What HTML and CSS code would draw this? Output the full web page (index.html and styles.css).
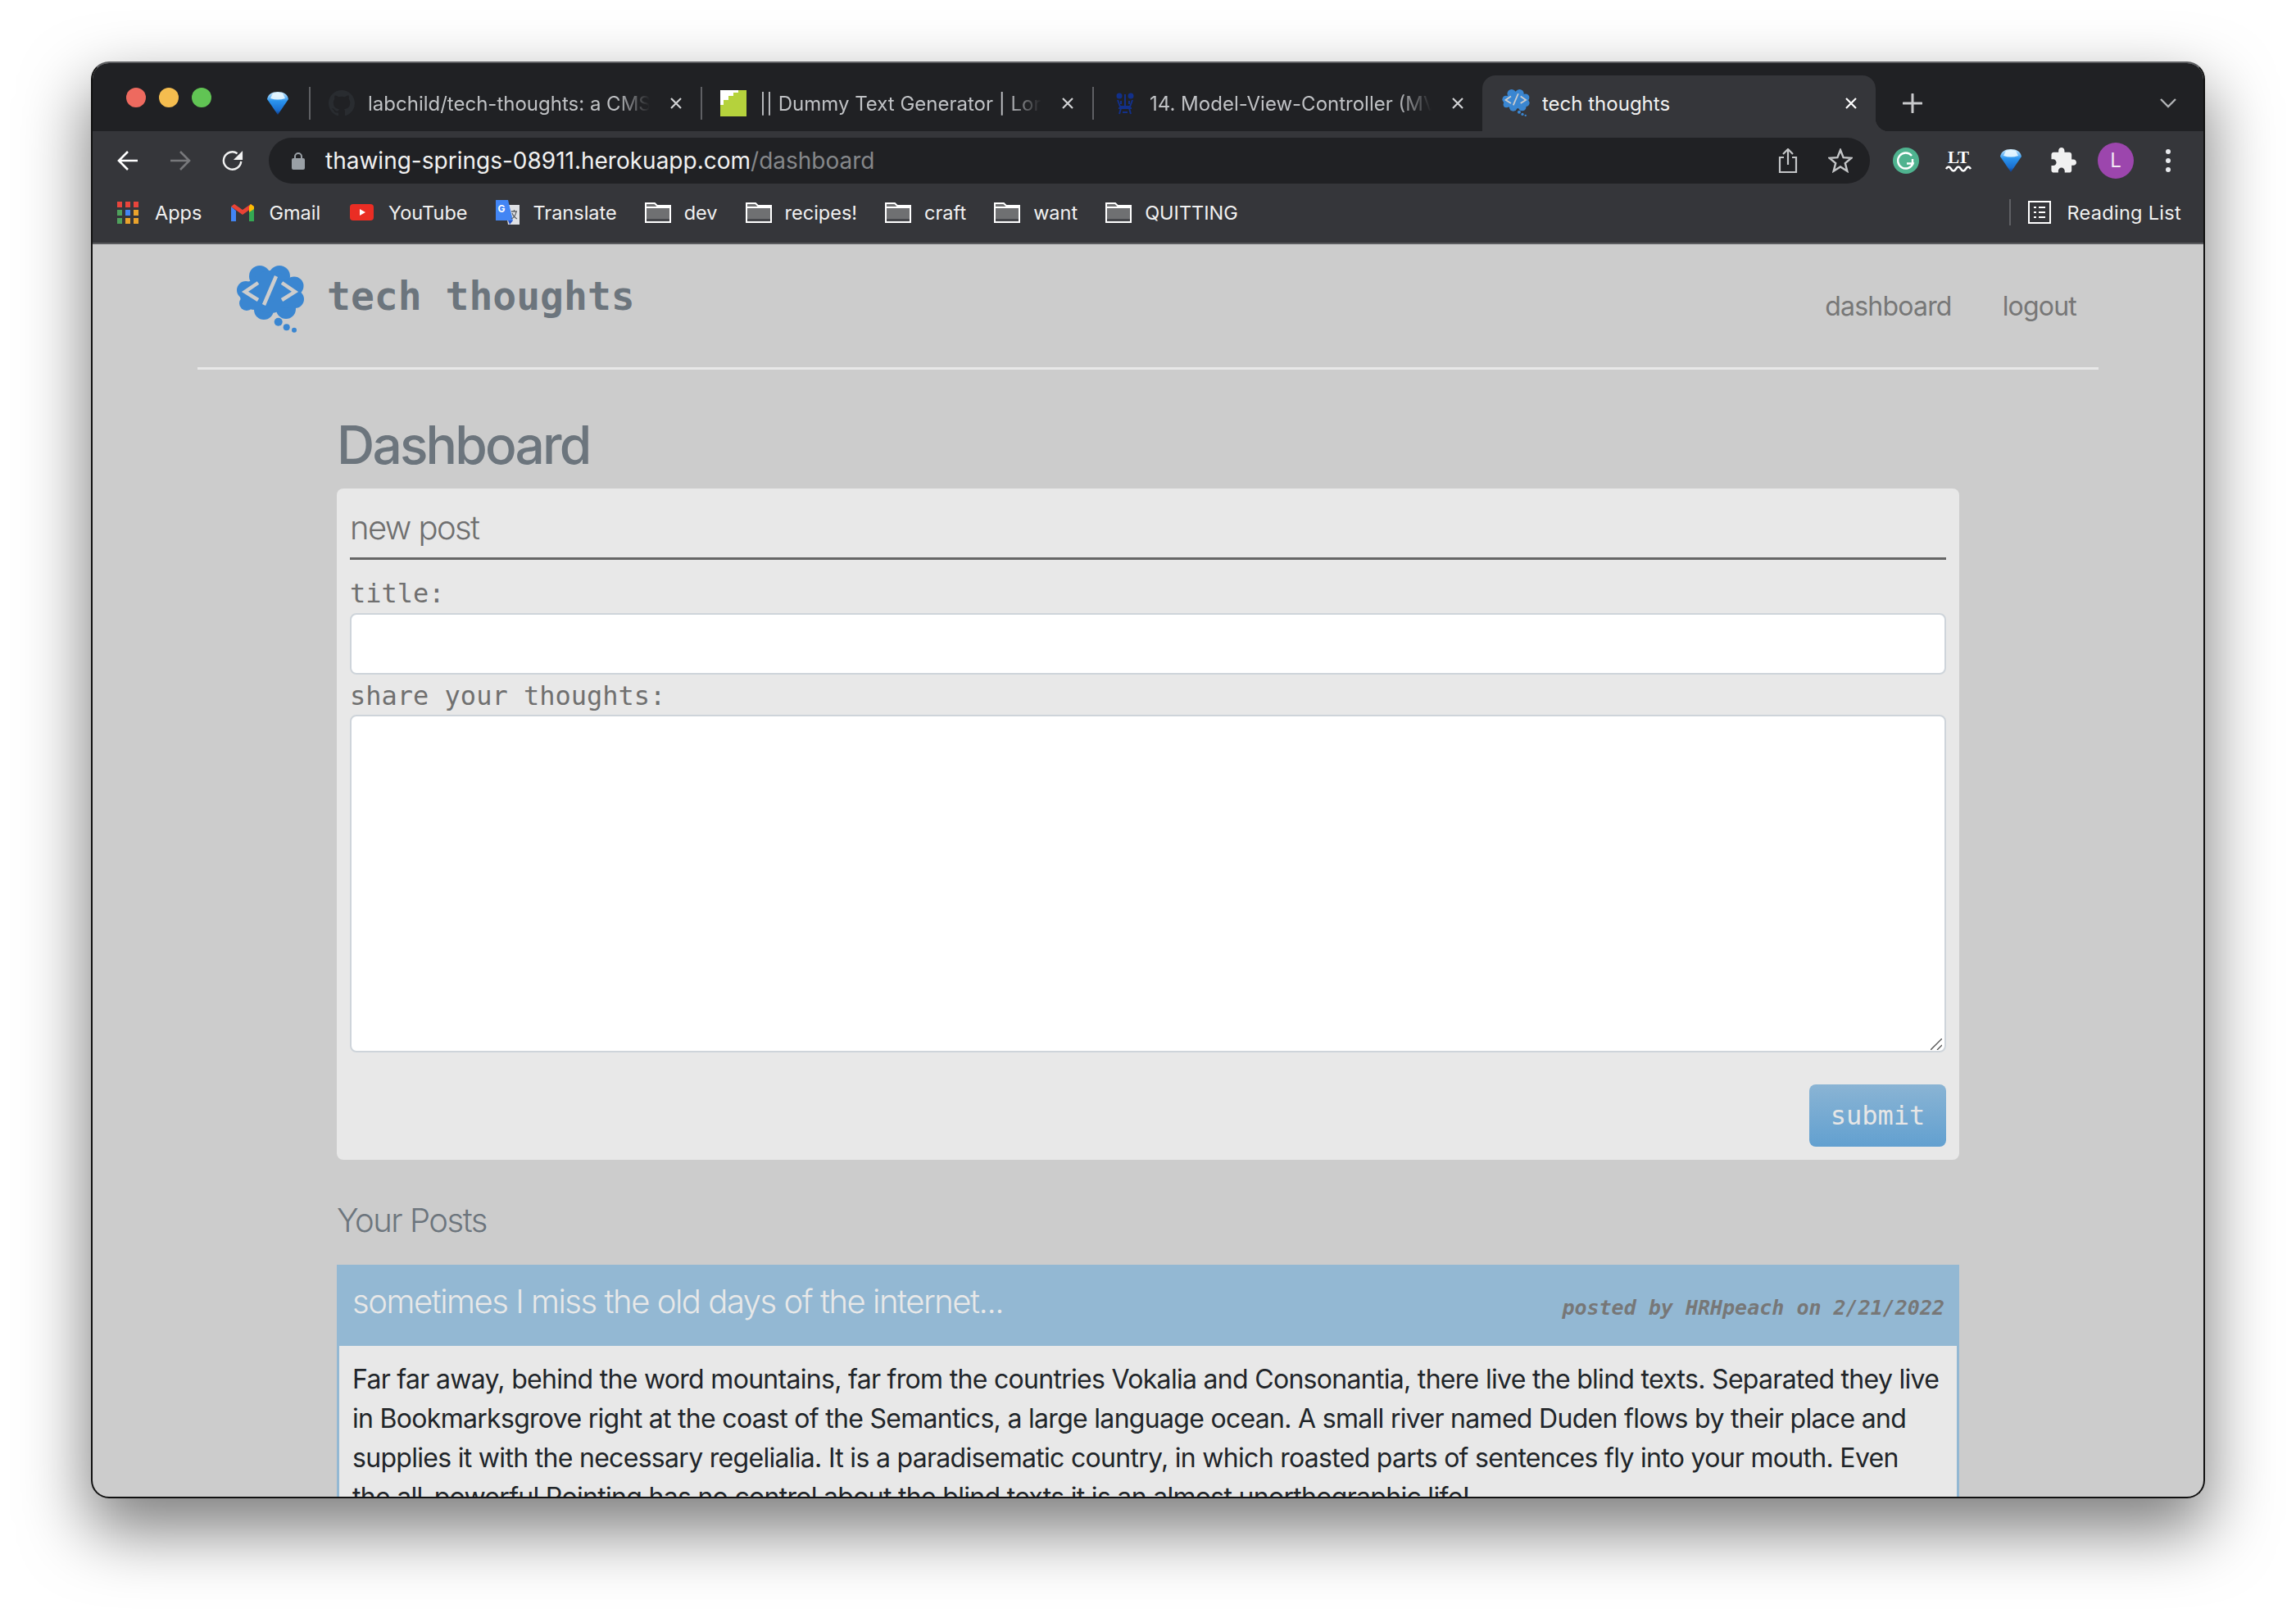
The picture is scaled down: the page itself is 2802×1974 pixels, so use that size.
FILE: index.html
```html
<!DOCTYPE html>
<html lang="en">

<head>
    <meta charset="UTF-8">
    <title>tech thoughts</title>
    <link rel="stylesheet" href="styles.css">
</head>

<body>
    <svg class="defs" width="0" height="0">
        <defs>
            <linearGradient id="gem" x1="0" y1="0" x2="0" y2="1">
                <stop offset="0" stop-color="#cfeeff" />
                <stop offset=".4" stop-color="#2a94ee" />
                <stop offset=".8" stop-color="#1a6fd0" />
                <stop offset="1" stop-color="#0d3a86" />
            </linearGradient>
            <symbol id="diamond" viewBox="0 0 26 28">
                <path d="M13 0C6 0 1 3 0 9l13 19L26 9C25 3 20 0 13 0z" fill="url(#gem)" />
                <path d="M7 2c4-1.5 8-1.5 12 0l3 6c-6 2-12 2-18 0z" fill="#eaf8ff" opacity=".9" />
            </symbol>
            <symbol id="folder" viewBox="0 0 32 26">
                <path d="M1 25V2h11l3 3h16v20z" fill="#6f7072" stroke="#fff" stroke-width="2" />
                <path d="M1 7h30" stroke="#fff" stroke-width="2" />
                <path d="M2 21h28v3H2z" fill="#45464a" />
            </symbol>
            <symbol id="close" viewBox="0 0 16 16">
                <path d="M2 2l12 12M14 2L2 14" fill="none" stroke="currentColor" stroke-width="2.2" />
            </symbol>
        </defs>
    </svg>

    <div class="window">
        <div class="tabstrip">
            <div class="lights">
                <span class="light red"></span>
                <span class="light yellow"></span>
                <span class="light green"></span>
            </div>
            <svg class="pinned"><use href="#diamond" /></svg>
            <span class="tab-sep"></span>
            <div class="tab">
                <svg class="favicon" viewBox="0 0 16 16"><path fill="#292c30" d="M8 0C3.58 0 0 3.58 0 8c0 3.54 2.29 6.53 5.47 7.59.4.07.55-.17.55-.38 0-.19-.01-.82-.01-1.49-2.01.37-2.53-.49-2.69-.94-.09-.23-.48-.94-.82-1.13-.28-.15-.68-.52-.01-.53.63-.01 1.08.58 1.23.82.72 1.21 1.87.87 2.33.66.07-.52.28-.87.51-1.07-1.78-.2-3.64-.89-3.64-3.95 0-.87.31-1.59.82-2.15-.08-.2-.36-1.02.08-2.12 0 0 .67-.21 2.2.82.64-.18 1.32-.27 2-.27.68 0 1.36.09 2 .27 1.53-1.04 2.2-.82 2.2-.82.44 1.1.16 1.92.08 2.12.51.56.82 1.27.82 2.15 0 3.07-1.87 3.75-3.65 3.95.29.25.54.73.54 1.48 0 1.07-.01 1.93-.01 2.2 0 .21.15.46.55.38A8.013 8.013 0 0016 8c0-4.42-3.58-8-8-8z" /></svg>
                <span class="tab-title">labchild/tech-thoughts: a CMS site for tech</span>
                <svg class="tab-close"><use href="#close" /></svg>
            </div>
            <span class="tab-sep"></span>
            <div class="tab">
                <svg class="favicon" viewBox="0 0 32 32"><rect width="32" height="32" fill="#fff" /><path d="M0 32V18h4v-6h6V7h6V3h6V0h10v32z" fill="#b5d23c" /></svg>
                <span class="tab-title">|| Dummy Text Generator | Lorem Ipsum</span>
                <svg class="tab-close"><use href="#close" /></svg>
            </div>
            <span class="tab-sep"></span>
            <div class="tab">
                <svg class="favicon favicon-crown" viewBox="0 0 24 26" fill="none" stroke="#12308a" stroke-width="2"><circle cx="5" cy="4" r="2.5" fill="#12308a" /><circle cx="19" cy="4" r="2.5" fill="#12308a" /><path d="M12 2v14M3 9l3 8h12l3-8M7 10v4M17 10v4M4 19h16M7 19l-2 7M17 19l2 7M9 24h6" /></svg>
                <span class="tab-title">14. Model-View-Controller (MVC) Pattern</span>
                <svg class="tab-close"><use href="#close" /></svg>
            </div>
            <div class="tab tab-active">
                <svg class="favicon logo-small" viewBox="0 0 82 84"><use href="#cloud" /></svg>
                <span class="tab-title">tech thoughts</span>
                <svg class="tab-close"><use href="#close" /></svg>
            </div>
            <svg class="new-tab" viewBox="0 0 24 24"><path d="M12 1v22M1 12h22" stroke="#c8c9cb" stroke-width="3" stroke-linecap="round" /></svg>
            <svg class="tab-list" viewBox="0 0 20 12"><path d="M1 1l9 9 9-9" fill="none" stroke="#b0b2b5" stroke-width="2.4" /></svg>
        </div>

        <div class="toolbar">
            <svg class="nav-icon" viewBox="0 0 26 26"><path d="M25 13H3M13 2L2 13l11 11" fill="none" stroke="#fff" stroke-width="2.6" /></svg>
            <svg class="nav-icon" viewBox="0 0 26 26"><path d="M1 13h22M13 2l11 11-11 11" fill="none" stroke="#77787b" stroke-width="2.6" /></svg>
            <svg class="nav-icon" viewBox="0 0 28 28"><path d="M25 15A11.5 11.5 0 1 1 20 4.5" fill="none" stroke="#f1f1f1" stroke-width="2.6" /><path d="M27 1v12H15z" fill="#f1f1f1" /></svg>
            <div class="omnibox">
                <svg class="lock" viewBox="0 0 16 22"><path d="M4 9V6a4 4 0 0 1 8 0v3" fill="none" stroke="#9aa0a6" stroke-width="2" /><rect y="8" width="16" height="14" rx="2" fill="#9aa0a6" /></svg>
                <span class="url">thawing-springs-08911.herokuapp.com<span class="url-path">/dashboard</span></span>
                <svg class="omni-share" viewBox="0 0 24 30" fill="none" stroke="#c4c6c8" stroke-width="2.2"><path d="M7 11H2v18h20V11h-5M12 20V2M6 7l6-6 6 6" /></svg>
                <svg class="omni-star" viewBox="0 0 30 30"><path d="M15 2l3.6 9.2 9.9.6-7.7 6.3 2.5 9.6L15 22.4l-8.3 5.3 2.5-9.6-7.7-6.3 9.9-.6z" fill="none" stroke="#c4c6c8" stroke-width="2.4" /></svg>
            </div>
            <div class="extensions">
                <svg class="ext-icon" viewBox="0 0 32 32"><circle cx="16" cy="16" r="16" fill="#4fb38f" /><path d="M23 10a9.5 9.5 0 1 0 1.5 9.5H17" fill="none" stroke="#fff" stroke-width="2.4" /><path d="M24 14v7" stroke="#fff" stroke-width="2.4" /></svg>
                <svg class="ext-icon" viewBox="0 0 32 26"><text x="16" y="16" text-anchor="middle" class="lt-mark">LT</text><path d="M1 23q3-5 6 0t6 0 6 0 6 0 6 0" fill="none" stroke="#fff" stroke-width="2.5" /></svg>
                <svg class="ext-gem"><use href="#diamond" /></svg>
                <svg class="ext-icon" viewBox="1 1 22 22"><path fill="#f1f1f1" d="M20.5 11H19V7c0-1.1-.9-2-2-2h-4V3.5C13 2.12 11.88 1 10.5 1S8 2.12 8 3.5V5H4c-1.1 0-1.99.9-1.99 2v3.8H3.5c1.49 0 2.7 1.21 2.7 2.7s-1.21 2.7-2.7 2.7H2V20c0 1.1.9 2 2 2h3.8v-1.5c0-1.49 1.21-2.7 2.7-2.7 1.49 0 2.7 1.21 2.7 2.7V22H17c1.1 0 2-.9 2-2v-4h1.5c1.38 0 2.5-1.12 2.5-2.5S21.88 11 20.5 11z" /></svg>
                <div class="avatar">L</div>
                <div class="kebab"><span></span><span></span><span></span></div>
            </div>
        </div>

        <div class="bookmarks">
            <div class="bookmark">
                <svg class="bm-apps" viewBox="0 0 26 27">
                    <rect width="6" height="7" fill="#e8453c" /><rect x="10" width="6" height="7" fill="#e8453c" /><rect x="20" width="6" height="7" fill="#e8453c" />
                    <rect y="10" width="6" height="7" fill="#4fa15c" /><rect x="10" y="10" width="6" height="7" fill="#4285f4" /><rect x="20" y="10" width="6" height="7" fill="#eaa32c" />
                    <rect y="20" width="6" height="7" fill="#4fa15c" /><rect x="10" y="20" width="6" height="7" fill="#eaa32c" /><rect x="20" y="20" width="6" height="7" fill="#eaa32c" />
                </svg>
                Apps
            </div>
            <div class="bookmark">
                <svg class="bm-gmail" viewBox="0 0 28 21">
                    <path d="M0 3v18h6V8z" fill="#4285f4" /><path d="M22 8v13h6V3z" fill="#34a853" />
                    <path d="M0 3l14 10L28 3l-4-3-10 7L4 0z" fill="#ea4335" /><path d="M24 0l4 3v3l-6 4V3z" fill="#fbbc04" />
                </svg>
                Gmail
            </div>
            <div class="bookmark bm-tight">
                <svg class="bm-youtube" viewBox="0 0 29 20"><rect width="29" height="20" rx="4" fill="#ea2d24" /><path d="M12 6l7 4-7 4z" fill="#fff" /></svg>
                YouTube
            </div>
            <div class="bookmark bm-tight">
                <svg class="bm-translate" viewBox="0 0 30 30">
                    <path d="M12 6h18v24H16z" fill="#dfe1e5" /><path d="M1 0h15l6 25H1z" fill="#4285f4" /><path d="M16 25h6l-4 5z" fill="#2a56c6" />
                    <text x="8" y="15" text-anchor="middle" class="tr-mark">G</text>
                    <path d="M20 14h7M23.5 12v2M26 14q-1 7-6 9M21 16q2 5 6 7" fill="none" stroke="#5f6368" stroke-width="1.3" />
                </svg>
                Translate
            </div>
            <div class="bookmark bm-tight"><svg class="bm-folder"><use href="#folder" /></svg>dev</div>
            <div class="bookmark bm-tight"><svg class="bm-folder"><use href="#folder" /></svg>recipes!</div>
            <div class="bookmark bm-tight"><svg class="bm-folder"><use href="#folder" /></svg>craft</div>
            <div class="bookmark bm-tight"><svg class="bm-folder"><use href="#folder" /></svg>want</div>
            <div class="bookmark bm-tight"><svg class="bm-folder"><use href="#folder" /></svg>QUITTING</div>
            <span class="bm-sep"></span>
            <div class="bookmark reading-list">
                <svg class="bm-reading" viewBox="0 0 28 28" fill="none" stroke="#fff" stroke-width="2">
                    <rect x="1" y="1" width="26" height="26" />
                    <path d="M7 8h3M13 8h8M7 14h3M13 14h8M7 20h3M13 20h8" />
                </svg>
                Reading List
            </div>
        </div>

        <div class="page">
            <header class="site-header">
                <div class="brand">
                    <svg class="logo" viewBox="0 0 84 84">
                        <g id="cloud">
                            <g fill="#3a86d1">
                                <circle cx="28" cy="13" r="13" /><circle cx="52" cy="13" r="13" /><circle cx="70" cy="25" r="11.5" />
                                <circle cx="71" cy="41" r="11" /><circle cx="60" cy="53" r="12" /><circle cx="33" cy="54" r="12" />
                                <circle cx="12" cy="46" r="9" /><circle cx="11" cy="30" r="11" /><circle cx="41" cy="32" r="26" />
                                <circle cx="22" cy="36" r="18" /><circle cx="60" cy="34" r="18" />
                                <circle cx="50.7" cy="68.7" r="5" /><circle cx="60.7" cy="75.3" r="4" /><circle cx="70" cy="78.7" r="3" />
                            </g>
                            <path d="M26 21L10 32l16 10M55 21l16 11-16 10M48 13L33 48" fill="none" stroke="#cdcdcd" stroke-width="4.5" />
                        </g>
                    </svg>
                    <span class="brand-name">tech thoughts</span>
                </div>
                <nav class="site-nav">
                    <a class="nav-link">dashboard</a>
                    <a class="nav-link">logout</a>
                </nav>
            </header>

            <main class="content">
                <h1 class="page-title">Dashboard</h1>
                <form class="new-post">
                    <h2 class="new-post-title">new post</h2>
                    <label class="field-label first">title:</label>
                    <input class="field-input" type="text">
                    <label class="field-label">share your thoughts:</label>
                    <div class="area-wrap">
                        <textarea class="field-area"></textarea>
                        <svg class="area-grip" viewBox="0 0 14 14" fill="none" stroke="#555" stroke-width="1.4"><path d="M0 14L14 0M8 14l6-6" /></svg>
                    </div>
                    <div class="form-actions">
                        <button class="submit-btn" type="button">submit</button>
                    </div>
                </form>

                <h3 class="posts-title">Your Posts</h3>
                <article class="post">
                    <div class="post-head">
                        <span class="post-title">sometimes I miss the old days of the internet...</span>
                        <span class="post-meta">posted by HRHpeach on 2/21/2022</span>
                    </div>
                    <p class="post-body">Far far away, behind the word mountains, far from the countries Vokalia and Consonantia, there live the blind texts. Separated they live in Bookmarksgrove right at the coast of the Semantics, a large language ocean. A small river named Duden flows by their place and supplies it with the necessary regelialia. It is a paradisematic country, in which roasted parts of sentences fly into your mouth. Even the all-powerful Pointing has no control about the blind texts it is an almost unorthographic life!</p>
                </article>
            </main>
        </div>
    </div>
</body>

</html>
```

FILE: styles.css
```css
* {
    box-sizing: border-box;
}

html,
body {
    margin: 0;
    background: #fff;
}

body {
    padding: 75px 111px 0;
    height: 1974px;
    overflow: hidden;
    font-family: Inter, "Noto Sans", sans-serif;
}

.defs {
    display: block;
    height: 0;
}

svg {
    display: block;
    flex-shrink: 0;
}

.window {
    width: 2580px;
    height: 1753px;
    display: flex;
    flex-direction: column;
    border: 2px solid #111;
    border-top-color: #5c5d60;
    border-radius: 22px;
    overflow: hidden;
    background: #ccc;
    box-shadow: 0 36px 80px 4px rgba(0, 0, 0, .5);
}

/* tabs */
.tabstrip {
    height: 83px;
    flex-shrink: 0;
    display: flex;
    align-items: center;
    padding-top: 15px;
    background: #202124;
    color: #c0c2c5;
    font-size: 24px;
}

.lights {
    display: flex;
    gap: 16px;
    align-self: flex-start;
    margin: 15px 0 0 41px;
}

.light {
    width: 24px;
    height: 24px;
    border-radius: 50%;
}

.red {
    background: #ee6a5f;
}

.yellow {
    background: #f5bd4f;
}

.green {
    background: #61c454;
}

.pinned {
    width: 26px;
    height: 28px;
    margin: 0 25px 0 68px;
}

.tab-sep {
    width: 2px;
    height: 40px;
    background: #5f6064;
}

.tab {
    width: 476px;
    height: 68px;
    display: flex;
    align-items: center;
    padding-left: 22px;
}

.favicon {
    width: 32px;
    height: 32px;
    margin-right: 16px;
}

.favicon-crown {
    width: 24px;
    height: 28px;
    margin: 0 18px 0 4px;
}

.tab-title {
    width: 344px;
    white-space: nowrap;
    overflow: hidden;
    -webkit-mask-image: linear-gradient(to right, #000 88%, transparent);
    mask-image: linear-gradient(to right, #000 88%, transparent);
}

.tab-close {
    width: 16px;
    height: 16px;
    margin-left: 24px;
    color: #d2d3d5;
}

.tab-active {
    position: relative;
    width: 480px;
    margin-left: -2px;
    padding-left: 24px;
    background: #35363a;
    border-radius: 16px 16px 0 0;
    color: #f1f1f1;
}

.tab-active::after {
    content: "";
    position: absolute;
    right: -16px;
    bottom: 0;
    width: 16px;
    height: 16px;
    background: radial-gradient(circle at 100% 0, transparent 16px, #35363a 16.5px);
}

.tab-active .tab-close {
    color: #fff;
}

.logo-small {
    width: 34px;
    height: 34px;
    margin-right: 15px;
}

.tab-active .tab-title {
    -webkit-mask-image: none;
    mask-image: none;
    width: 345px;
}

.new-tab {
    width: 24px;
    height: 24px;
    margin-left: 33px;
}

.tab-list {
    width: 20px;
    height: 12px;
    margin: 0 33px 0 auto;
}

/* toolbar */
.toolbar {
    height: 72px;
    flex-shrink: 0;
    display: flex;
    align-items: center;
    padding-left: 30px;
    background: #35363a;
}

.nav-icon {
    width: 26px;
    height: 26px;
    margin-right: 38px;
}

.nav-icon:nth-child(3) {
    margin-right: 31px;
}

.omnibox {
    width: 1954px;
    height: 56px;
    display: flex;
    align-items: center;
    padding: 0 21px 0 28px;
    border-radius: 28px;
    background: #202124;
}

.lock {
    width: 16px;
    height: 22px;
    margin-right: 25px;
}

.url {
    flex: 1;
    font-size: 28px;
    color: #f1f1f1;
    white-space: nowrap;
}

.url-path {
    color: #85878a;
}

.omni-share {
    width: 24px;
    height: 30px;
    margin-right: 37px;
}

.omni-star {
    width: 30px;
    height: 30px;
}

.extensions {
    display: grid;
    grid-template-columns: repeat(6, 64px);
    justify-items: center;
    align-items: center;
    margin-left: 12px;
}

.ext-icon {
    width: 32px;
    height: 32px;
}

.lt-mark {
    font-family: "Liberation Serif", serif;
    font-weight: bold;
    font-size: 21px;
    fill: #fff;
}

.ext-gem {
    width: 28px;
    height: 28px;
}

.avatar {
    width: 44px;
    height: 44px;
    border-radius: 50%;
    background: #9c46ad;
    color: #f2e8f4;
    font-size: 24px;
    line-height: 44px;
    text-align: center;
}

.kebab {
    display: flex;
    flex-direction: column;
    gap: 5px;
}

.kebab span {
    width: 6px;
    height: 6px;
    border-radius: 50%;
    background: #e8eaed;
}

/* bookmarks bar */
.bookmarks {
    height: 66px;
    flex-shrink: 0;
    display: flex;
    align-items: center;
    gap: 18px;
    padding: 0 27px 10px 30px;
    background: #35363a;
    border-bottom: 2px solid #5a5b5e;
    color: #f1f1f1;
    font-size: 23.5px;
}

.bookmark {
    display: flex;
    align-items: center;
    white-space: nowrap;
    margin-right: 18px;
}

.bm-tight {
    margin-right: 16px;
}

.bookmark svg {
    margin-right: 16px;
}

.bookmark .bm-apps {
    width: 26px;
    height: 27px;
    margin-right: 20px;
}

.bookmark .bm-gmail {
    width: 28px;
    height: 21px;
    margin-right: 18px;
}

.bookmark .bm-youtube {
    width: 29px;
    height: 20px;
    margin-right: 18px;
}

.bm-translate {
    width: 30px;
    height: 30px;
}

.tr-mark {
    font-size: 12px;
    font-weight: bold;
    fill: #fff;
}

.bm-folder {
    width: 32px;
    height: 26px;
}

.bm-sep {
    width: 2px;
    height: 32px;
    margin-left: auto;
    background: #5f6064;
}

.reading-list {
    margin: 0 0 0 3px;
    letter-spacing: .3px;
}

.bookmark .bm-reading {
    width: 28px;
    height: 28px;
    margin-right: 19px;
}

/* site */
.page {
    flex: 1;
    overflow: hidden;
}

.site-header {
    width: 2320px;
    height: 153px;
    margin: 0 auto;
    display: flex;
    justify-content: space-between;
    align-items: center;
    padding: 0 27px 0 48px;
    border-bottom: 3px solid #e8e8e8;
}

.brand {
    display: flex;
    align-self: flex-start;
    align-items: flex-start;
    gap: 26px;
    padding-top: 26px;
}

.logo {
    width: 84px;
    height: 84px;
}

.brand-name {
    margin-top: 9px;
    font-family: "DejaVu Sans Mono", "Liberation Mono", monospace;
    font-weight: bold;
    font-size: 48px;
    line-height: 56px;
    color: #6c757d;
    white-space: pre;
}

.site-nav {
    display: flex;
    gap: 62px;
}

.nav-link {
    font-size: 32px;
    letter-spacing: -.8px;
    color: #777;
}

.content {
    width: 1980px;
    margin: 0 auto;
    padding-top: 54px;
}

.page-title {
    margin: 0 0 15px;
    font-size: 64px;
    line-height: 76px;
    letter-spacing: -2.8px;
    font-weight: 500;
    color: #6c757d;
}

.new-post {
    display: block;
    padding: 24px 16px 16px;
    border-radius: 8px;
    background: #e8e8e8;
}

.new-post-title {
    margin: 0;
    padding-bottom: 12px;
    border-bottom: 3px solid #666;
    font-size: 40px;
    line-height: 48px;
    letter-spacing: -1.6px;
    font-weight: 300;
    color: #6f6f6f;
}

.field-label {
    display: block;
    margin: 7px 0 4px;
    font-family: "DejaVu Sans Mono", "Liberation Mono", monospace;
    font-size: 32px;
    line-height: 38px;
    color: #707070;
}

.field-label.first {
    margin: 22px 0 5px;
}

.field-input,
.field-area {
    display: block;
    width: 100%;
    border: 2px solid #ced4da;
    border-radius: 8px;
    background: #fff;
    outline: none;
}

.field-input {
    height: 75px;
}

.area-wrap {
    position: relative;
}

.field-area {
    height: 412px;
    resize: none;
}

.area-grip {
    position: absolute;
    right: 5px;
    bottom: 3px;
    width: 14px;
    height: 14px;
}

.form-actions {
    display: flex;
    justify-content: flex-end;
    margin-top: 39px;
}

.submit-btn {
    width: 167px;
    height: 76px;
    padding: 0;
    border: 0;
    border-radius: 8px;
    background: linear-gradient(#8ab4d4, #62a0d0);
    color: #e6e6e6;
    font-family: "DejaVu Sans Mono", "Liberation Mono", monospace;
    font-size: 32px;
}

.posts-title {
    margin: 50px 0 30px;
    font-size: 40px;
    line-height: 48px;
    letter-spacing: -1.5px;
    font-weight: 300;
    color: #6c757d;
}

.post-head {
    height: 99px;
    display: flex;
    justify-content: space-between;
    align-items: flex-start;
    padding: 0 18px 0 19px;
    background: #93b8d3;
}

.post-title {
    margin-top: 21px;
    font-size: 40px;
    line-height: 48px;
    letter-spacing: -1.45px;
    font-weight: 300;
    color: #e8e8e8;
}

.post-meta {
    margin-top: 38px;
    font-family: "DejaVu Sans Mono", "Liberation Mono", monospace;
    font-size: 25px;
    line-height: 30px;
    font-style: italic;
    font-weight: bold;
    color: #777;
}

.post-body {
    margin: 0;
    padding: 17px 21px 16px 16px;
    border: solid #93b8d3;
    border-width: 0 3px;
    background: #e8e8e8;
    font-size: 32px;
    line-height: 48px;
    letter-spacing: -.7px;
    color: #212529;
}
```
